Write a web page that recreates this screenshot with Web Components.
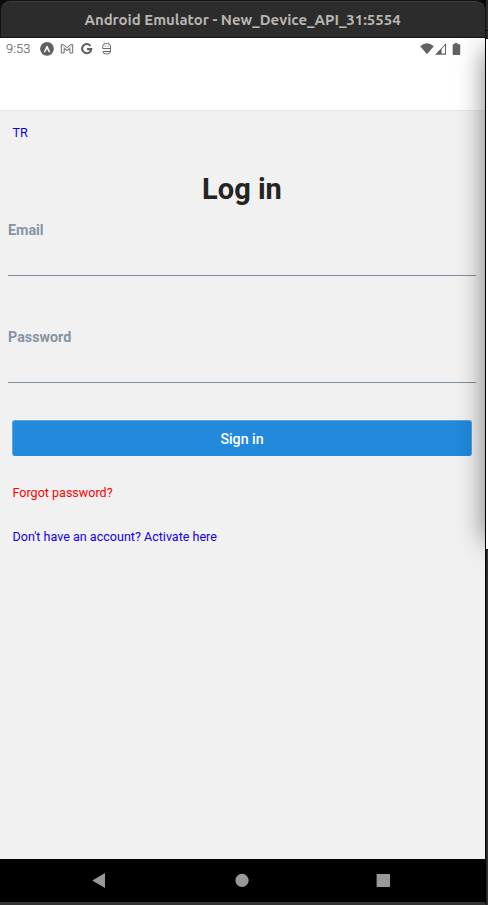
<!DOCTYPE html>
<html lang="en">
<head>
<meta charset="utf-8">
<title>Android Emulator</title>
<style>
html,body{margin:0;height:100%;overflow:hidden;background:#2b2b2b}
</style>
</head>
<body>
<emulator-window>
  <title-bar slot="title">Android Emulator - New_Device_API_31:5554</title-bar>
  <status-bar time="9:53"></status-bar>
  <app-header></app-header>
  <login-screen></login-screen>
  <nav-bar></nav-bar>
</emulator-window>
<script>
function define(name, html) {
  customElements.define(name, class extends HTMLElement {
    constructor() {
      super();
      const t = document.createElement('template');
      t.innerHTML = html;
      this.attachShadow({mode: 'open'}).append(t.content.cloneNode(true));
    }
    connectedCallback() {
      const time = this.shadowRoot.querySelector('time');
      if (time) time.textContent = this.getAttribute('time');
    }
  });
}
define('emulator-window', `<style>
:host{display:grid;grid-template-columns:486px 2px;width:488px;height:905px;position:relative;overflow:hidden;background:#2b2b2b}
.frame{display:grid;grid-template-rows:38px auto;height:905px}
.screen{box-sizing:border-box;width:486px;height:867px;border-right:1px solid #000;border-bottom:3px solid #333;background:#f1f1f1;display:flex;flex-direction:column}
.side{display:grid;grid-template-rows:30px 1px 7px 1px 510px 1px auto}
.side i:nth-child(2),.side i:nth-child(4),.side i:nth-child(6){background:#0a0a0a}
.side i:nth-child(5){background:#fff}
.side i:nth-child(7){background:linear-gradient(90deg,#222 1px,#333 1px)}
.clip{position:absolute;left:440px;top:38px;width:46px;height:821px;overflow:hidden;pointer-events:none}
.clip b{position:absolute;left:46px;top:12px;width:60px;height:490px;box-shadow:0 0 27px 1px rgba(0,0,0,.5)}
.edge{position:absolute;left:485px;top:38px;width:1px;height:512px;background:#000}
</style><div class="frame"><slot name="title"></slot><div class="screen"><slot></slot></div></div>
<div class="side"><i></i><i></i><i></i><i></i><i></i><i></i><i></i></div><div class="clip"><b></b></div><div class="edge"></div>`);
define('title-bar', `<style>
:host{display:block;height:38px;background:#0b0b0b;width:486px}
div{box-sizing:border-box;height:38px;display:flex;align-items:center;justify-content:center;background:#2c2c2c;border:1px solid #141414;border-top:1px solid #111;box-shadow:inset 0 1px #3b3b3b;border-radius:10px 10px 0 0;color:#b9b5b0;font:bold 14.95px/20px Ubuntu,"Noto Sans",sans-serif;white-space:nowrap}
span{padding-top:2px;margin-right:1px}
</style><div><span><slot></slot></span></div>`);
define('status-bar', `<style>
:host{display:flex;height:22px;background:#fff;color:#686868;font:300 12.8px/22px Roboto,sans-serif}
time{width:38px;padding-left:6px;box-sizing:border-box;letter-spacing:.15px;-webkit-text-stroke:.15px #686868}
svg{display:block}
</style><time></time>
<svg width="447" height="22" viewBox="38 38 447 22">
<circle cx="47" cy="48.8" r="6.9" fill="#606060"/>
<path d="M43.8 52.1 46.1 46.7Q47 44.8 47.9 46.7L50.2 52.1Q49.2 53 48.6 51.8L47 49 45.4 51.8Q44.8 53 43.8 52.1Z" fill="#fff"/>
<path d="M61.3 44.6h2l3.7 3 3.7-3h2v8.4h-2.8v-4.5L67 50.7l-2.9-2.2V53h-2.8Z" fill="none" stroke="#6a6a6a" stroke-width="1"/>
<path d="M61.5 45.3 67 49.6l5.5-4.3" fill="none" stroke="#888" stroke-width=".6"/>
<path d="M90.4 45.8A4.6 4.6 0 1 0 91.3 49.1H87.1" fill="none" stroke="#606060" stroke-width="2.1"/>
<path d="M110.5 48.5h-7.8V46.5q0-2.9 2.9-2.9h2q2.9 0 2.9 2.9V51q0 2.9-2.9 2.9h-2q-2.6 0-2.6-2.4H110M104.8 43.4l-.6-.9M108.4 43.4l.6-.9" fill="none" stroke="#686868" stroke-width="1"/>
<path d="M104.8 46.2h1M107.5 46.2h1" stroke="#686868" stroke-width="1"/>
<path d="M420.2 46.2Q427 40.2 433.8 46.2L427 54.2Z" fill="#626262"/>
<path d="M446 43.2V54.8H435Z" fill="#626262"/>
<path d="M441.6 48.9 445 45.4V53.6H441.6Z" fill="#fff"/>
<path d="M454.5 43h3v1.2h2.2q.5 0 .5.5V54.3q0 .6-.6.6h-6.3q-.6 0-.6-.6V44.7q0-.5.5-.5h1.3Z" fill="#626262"/>
</svg>`);
define('app-header', `<style>:host{display:block;box-sizing:border-box;height:51px;background:#fff;border-bottom:1px solid #e8e8e8}</style>`);
define('text-link', `<style>:host{display:block;font:12.55px/16px Roboto,sans-serif;color:#1100e8;margin-left:12.5px;white-space:nowrap}</style><slot></slot>`);
define('form-field', `<style>
:host{display:block;margin:0 9px 0 8px;box-sizing:border-box;height:55px;border-bottom:1px solid #8090a0;color:#8694a3;font:bold 14.3px/18px Roboto,sans-serif}
</style><slot></slot>`);
define('action-button', `<style>
:host{display:flex;margin:0 13px 0 12px;height:36px;box-sizing:border-box;border:1px solid #58a5e4;border-bottom-color:#2289dc;border-radius:3px;background:#2289dc;color:#fff;align-items:center;justify-content:center;font:500 14.2px/18px Roboto,sans-serif;padding-top:1px}
</style><slot></slot>`);
define('login-screen', `<style>
:host{display:flex;flex-direction:column;height:748px;background:#f1f1f1}
.tr{margin-top:14px}
h1{margin:30px 1px 0 0;height:36px;text-align:center;color:#242424;font:bold 29px/36px Roboto,sans-serif}
.email{margin-top:14px}
.pw{margin-top:52px}
action-button{margin-top:37px}
.forgot{margin-top:29px;color:#f00}
.reg{margin-top:28px}
</style>
<text-link class="tr">TR</text-link><h1>Log in</h1>
<form-field class="email">Email</form-field><form-field class="pw">Password</form-field>
<action-button>Sign in</action-button>
<text-link class="forgot">Forgot password?</text-link>
<text-link class="reg">Don't have an account? Activate here</text-link>`);
define('nav-bar', `<style>:host{display:block;height:43px;background:#000}svg{display:block}</style>
<svg width="485" height="43" viewBox="0 859 485 43" fill="#999"><path d="M92.3 880.4 105 873v15Z"/><circle cx="242" cy="880.4" r="6.6"/><path d="M376.6 874h13.4v13h-13.4Z"/></svg>`);
</script>
</body>
</html>
